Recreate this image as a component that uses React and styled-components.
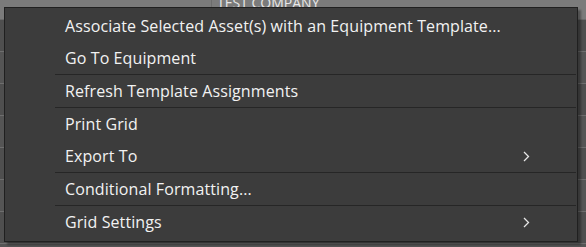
import React from 'react';
import styled, { createGlobalStyle } from 'styled-components';

const Global = createGlobalStyle`
  html, body { margin: 0; padding: 0; }
  body {
    width: 586px;
    height: 247px;
    overflow: hidden;
    background: #595959;
    font-family: "Open Sans", "Noto Sans", "DejaVu Sans", sans-serif;
  }
`;

const Screen = styled.div`
  position: relative;
  width: 586px;
  height: 247px;
  overflow: hidden;
  background: #595959;
`;

const HeaderBar = styled.div`
  display: grid;
  grid-template-columns: 211px 1fr;
  height: 19px;
  background: #7b7b7b;
  border-bottom: 1px solid #6a6a6a;
`;

const HeaderCell = styled.div`
  border-left: ${p => (p.$divided ? '1px solid #6c6c6c' : 'none')};
  color: #e8e8e8;
  font-size: 14px;
  line-height: 14px;
  padding-left: 5px;
  margin-top: -4px;
  white-space: nowrap;
  overflow: hidden;
`;

const GridBody = styled.div`
  display: flex;
  flex-direction: column;
`;

const GridRow = styled.div`
  height: 31px;
  border-bottom: 1px solid #6e6e6e;
  background: ${p => (p.$alt ? '#555555' : '#4f4f4f')};
`;

const Menu = styled.ul`
  position: absolute;
  left: 4px;
  top: 7px;
  width: 572px;
  margin: 0;
  padding: 2px 0 3px;
  list-style: none;
  background: #3c3c3c;
  border: 1px solid #202020;
  box-shadow: 3px 3px 2px rgba(0, 0, 0, 0.35);
`;

const Item = styled.li`
  display: flex;
  align-items: center;
  justify-content: space-between;
  height: 32px;
  padding: 0 47px 0 60px;
  color: #f2f2f2;
  font-size: 16px;
  letter-spacing: 0.1px;
  white-space: nowrap;
`;

const Separator = styled.li`
  height: 1px;
  margin: 0 1px 0 50px;
  background: #262626;
`;

const Chevron = () => (
  <svg width="7" height="11" viewBox="0 0 7 11">
    <path d="M1 1 L5.5 5.5 L1 10" fill="none" stroke="#e6e6e6" strokeWidth="1.3" />
  </svg>
);

const items = [
  { label: 'Associate Selected Asset(s) with an Equipment Template...' },
  { label: 'Go To Equipment', sep: true },
  { label: 'Refresh Template Assignments', sep: true },
  { label: 'Print Grid' },
  { label: 'Export To', sub: true, sep: true },
  { label: 'Conditional Formatting...', sep: true },
  { label: 'Grid Settings', sub: true },
];

export default function App() {
  return (
    <Screen>
      <Global />
      <HeaderBar>
        <div />
        <HeaderCell $divided>TEST COMPANY</HeaderCell>
      </HeaderBar>
      <GridBody>
        {Array.from({ length: 8 }).map((_, i) => (
          <GridRow key={i} $alt={i % 2 === 1} />
        ))}
      </GridBody>
      <Menu>
        {items.map(it => (
          <React.Fragment key={it.label}>
            <Item>
              <span>{it.label}</span>
              {it.sub && <Chevron />}
            </Item>
            {it.sep && <Separator />}
          </React.Fragment>
        ))}
      </Menu>
    </Screen>
  );
}
